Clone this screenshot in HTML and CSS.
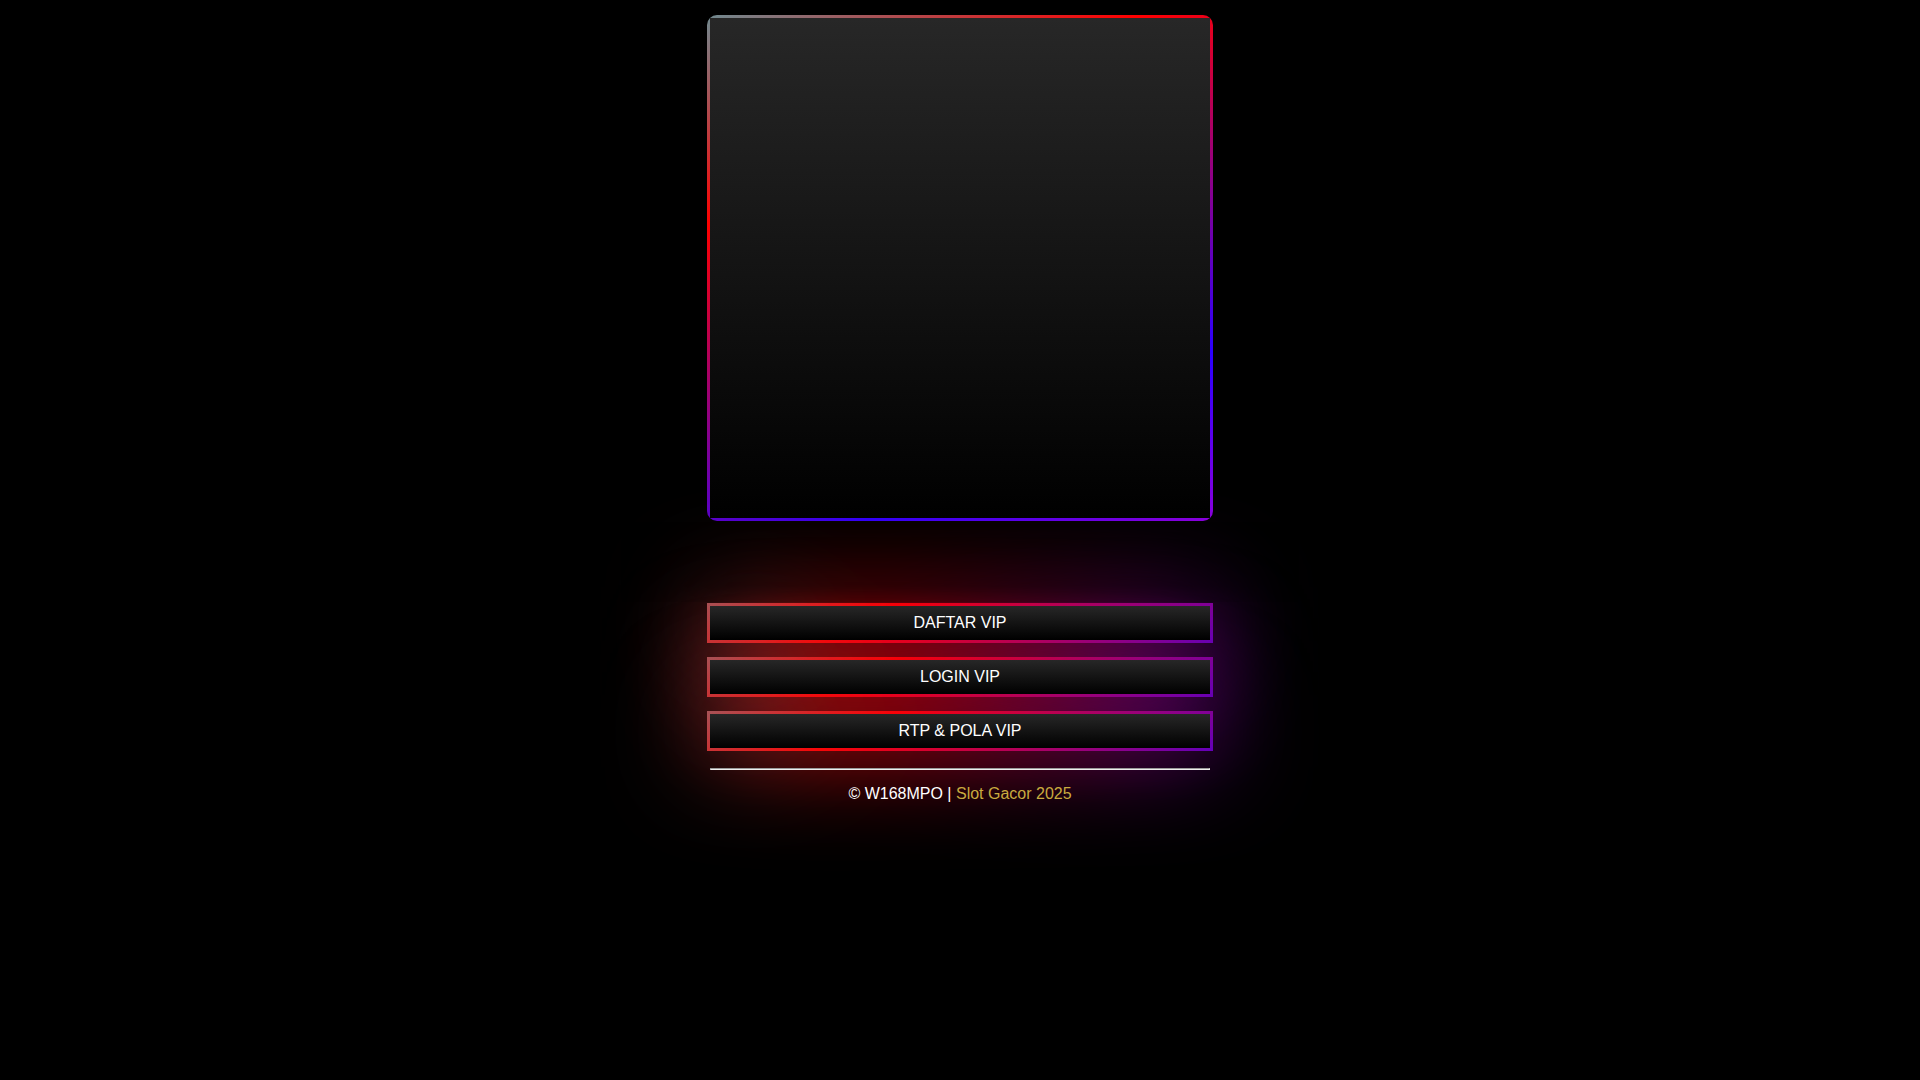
FILE: index.html
```html
<!DOCTYPE html>
<html lang="id">
<head>
    <meta charset="UTF-8">
    <meta name="viewport" content="width=device-width, initial-scale=1.0">
    <title>W168MPO</title>
    <link rel="stylesheet" href="styles.css">
</head>
<body>
    <div class="container">
        <div class="banner frame"></div>
        <div class="spacer"></div>
        <nav class="links">
            <a href="#" class="btn frame glow">DAFTAR VIP</a>
            <a href="#" class="btn frame glow">LOGIN VIP</a>
            <a href="#" class="btn frame glow">RTP &amp; POLA VIP</a>
        </nav>
        <hr>
        <footer class="footer">© W168MPO | <a href="#">Slot Gacor 2025</a></footer>
    </div>
</body>
</html>
```
FILE: styles.css
```css
body {
    font-family: "Liberation Sans", Arial, sans-serif;
    font-size: 16px;
    background: #000;
    color: #fff;
    margin: 0;
    min-height: 100vh;
}

a {
    text-decoration: none;
}

.container {
    max-width: 500px;
    margin: 0 auto;
    padding: 18px 8px;
    text-align: center;
}

.frame {
    position: relative;
    background: linear-gradient(#272727, #000);
}

/* gradient border, and the same gradient blurred behind it */
.frame::before,
.glow::after {
    content: "";
    position: absolute;
    inset: -3px;
    z-index: -1;
    background: linear-gradient(154deg, #00f4ff, #ff0000, #2b00ff, #ff00b3, #00f4ff);
    background-size: 400%;
    background-position: 22% 0;
}

.glow::after {
    filter: blur(50px);
}

.banner {
    aspect-ratio: 1;
}

.banner::before {
    border-radius: 10px;
}

.spacer {
    position: relative;
    height: 68px;
}

/* soft shade that dims the glow between the banner and the links */
.spacer::before {
    content: "";
    position: absolute;
    inset: 4px -90px -16px;
    background: linear-gradient(to right, transparent, rgba(0, 0, 0, 0.35) 16%, rgba(0, 0, 0, 0.35) 84%, transparent);
    mask-image: linear-gradient(rgba(0, 0, 0, 0.3), #000 80%, rgba(0, 0, 0, 0.4));
}

.links {
    display: flex;
    flex-direction: column;
    gap: 20px;
    margin-top: 20px;
}

.btn {
    padding: 8px;
    line-height: 18px;
    color: #fff;
}

hr {
    margin: 20px 0 15px;
}

.footer {
    line-height: 18px;
}

.footer a {
    color: #c9ab3f;
}
```
